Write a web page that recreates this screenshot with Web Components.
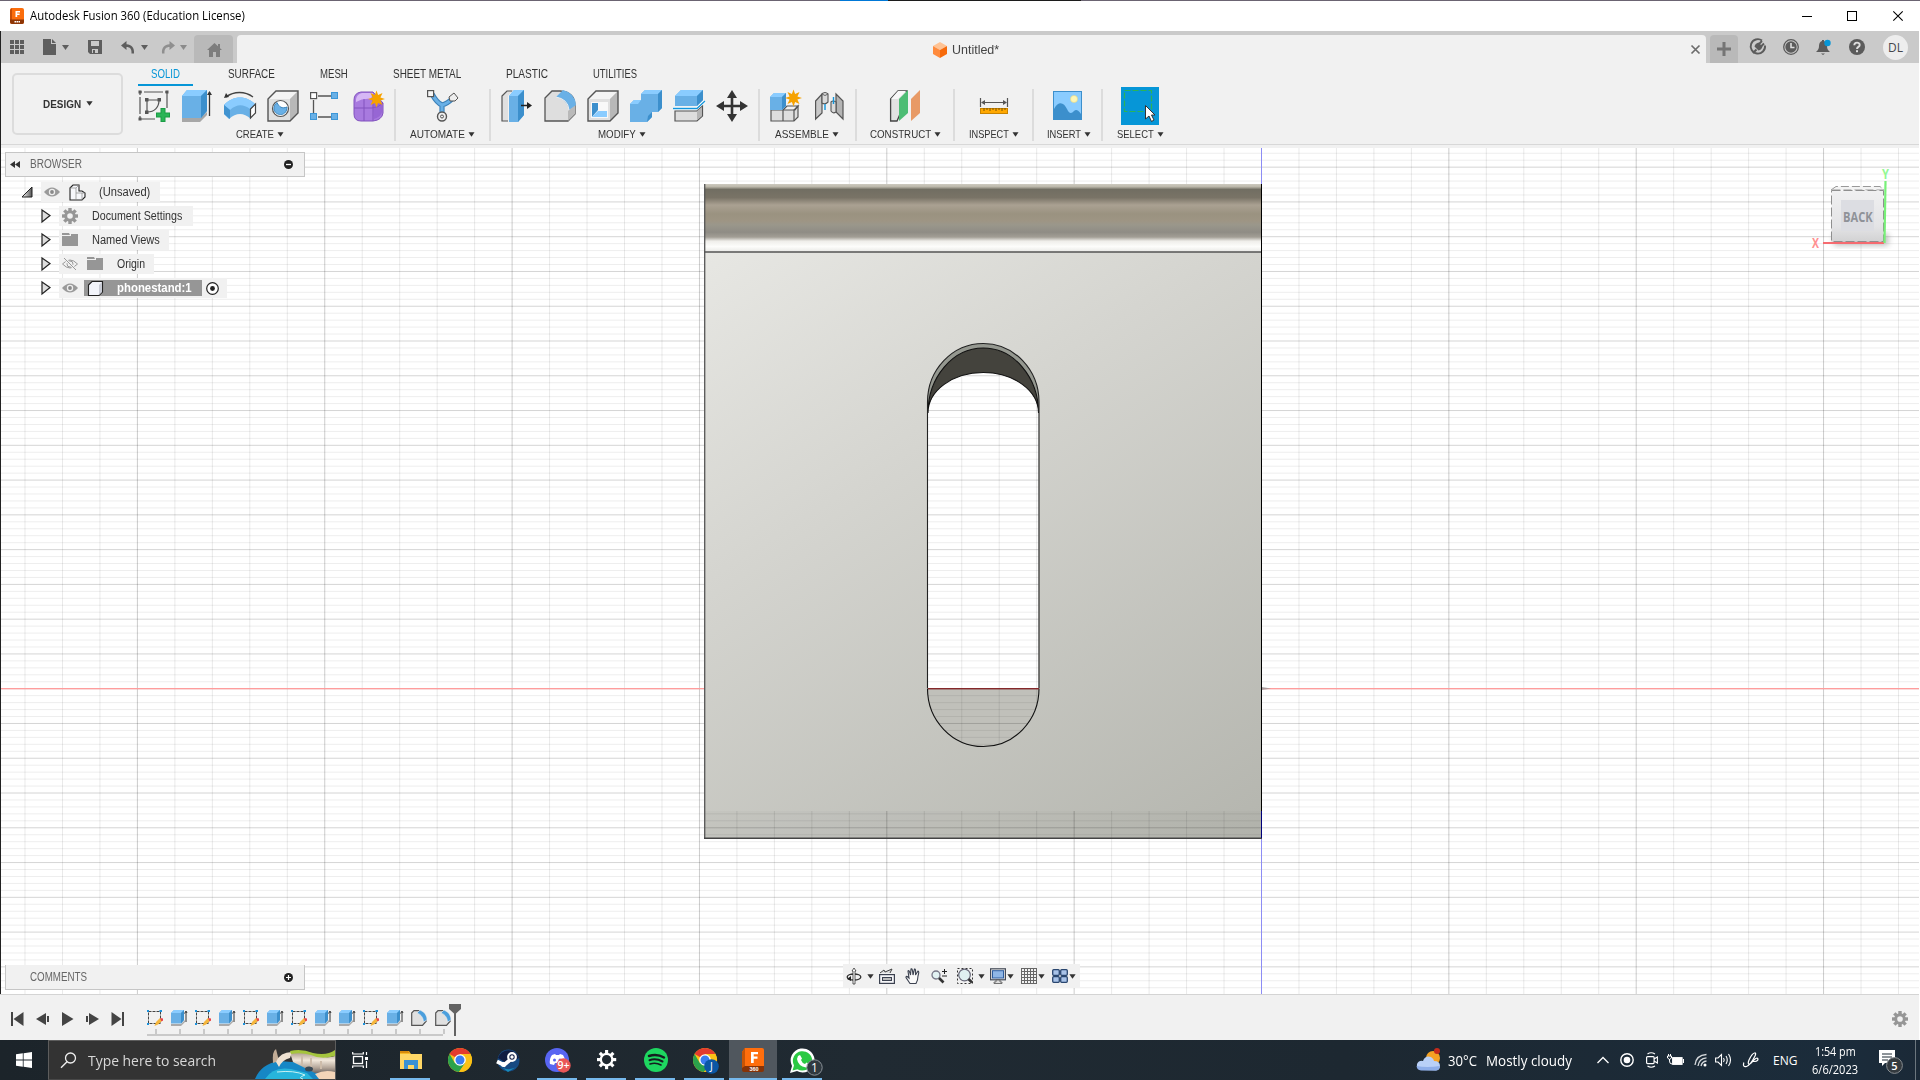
<!DOCTYPE html>
<html lang="en">
<head>
<meta charset="utf-8">
<title>Autodesk Fusion 360 (Education License)</title>
<style>
html,body{margin:0;padding:0;background:#fff;overflow:hidden}
body{width:1920px;height:1080px;font-family:"Liberation Sans",Arial,sans-serif;font-size:12px;color:#333}
</style>
</head>
<body>
<fusion-app></fusion-app>
<script>
const box=(f,t,s,o)=>`<path d="M1 9L9 1H31V23L23 31H1z" fill="${f}"/><path d="M1 9L9 1H31L23 9z" fill="${t}"/><path d="M23 9L31 1V23L23 31z" fill="${s}"/>${o?`<path d="M1 9L9 1H31V23L23 31H1z" fill="none" stroke="${o}" stroke-width="1.4"/>`:''}`;
const gear=c=>{let t='';for(let a=0;a<360;a+=45)t+=`<rect x="6.3" y="0" width="3.4" height="4" transform="rotate(${a} 8 8)"/>`;return `<g fill="${c}">${t}<path fill-rule="evenodd" d="M8 2.2a5.8 5.8 0 1 0 0 11.6a5.8 5.8 0 1 0 0-11.6zM8 5.2a2.8 2.8 0 1 1 0 5.6a2.8 2.8 0 1 1 0-5.6z"/></g>`};
const star=(x,y,r)=>{let p='';for(let i=0;i<16;i++){const q=i%2?r*.5:r,a=i*Math.PI/8;p+=`${(x+q*Math.sin(a)).toFixed(1)},${(y-q*Math.cos(a)).toFixed(1)} `}return `<polygon points="${p}" fill="#f6a200"/>`};
const chrome=`<circle cx="12" cy="12" r="12" fill="#fbc116"/><path d="M12 12L1.6 6A12 12 0 0 1 22.4 6H12z" fill="#e33b2e"/><path d="M1.6 6A12 12 0 0 0 11 24L17.2 15L12 12L6.8 15z" fill="#2ba24c"/><path d="M22.4 6H12L17.2 15L11 24A12 12 0 0 0 22.4 6z" fill="#fbc116"/><circle cx="12" cy="12" r="5.8" fill="#fff"/><circle cx="12" cy="12" r="4.5" fill="#3a7df0"/>`;
const I={
app:[14,16,`<rect width="14" height="16" rx="2" fill="#fb6d0c"/><path d="M0 2L2 0V12H0z" fill="#c84d04"/><path d="M0 11.5H14V14a2 2 0 0 1-2 2H2a2 2 0 0 1-2-2z" fill="#8e3606"/><path d="M5.5 9V3H10V4.5H7.2V5.6H9.6V7H7.2V9z" fill="#fff"/><path d="M4.5 13.8H10" stroke="#fff" stroke-width="1.4" stroke-dasharray="1.6 .5"/>`],
min:[10,10,`<path d="M0 5.5H10" stroke="#000"/>`],
max:[10,10,`<rect x=".5" y=".5" width="9" height="9" fill="none" stroke="#000"/>`],
close:[10,10,`<path d="M.3 .3L9.7 9.7M9.7 .3L.3 9.7" stroke="#000" stroke-width="1.1"/>`],
apps:[14,14,[0,5,10].map(x=>[0,5,10].map(y=>`<rect x="${x}" y="${y}" width="4" height="4" fill="#5e5e5e"/>`).join('')).join('')],
file:[13,16,`<path d="M0 0H8V5H13V16H0z" fill="#5e5e5e"/><path d="M9 0L13 4H9z" fill="#5e5e5e"/>`],
caret:[7,5,`<path d="M0 0H7L3.5 5z" fill="currentColor"/>`],
save:[14,14,`<path fill-rule="evenodd" d="M0 0H14V14H2L0 12zM3 1V6H11V1zM4 9V13H10V9z" fill="#5e5e5e"/><rect x="5" y="10" width="2" height="3" fill="#5e5e5e"/>`],
undo:[14,13,`<path d="M5.500 0L0 4.500L5.500 9V6C9 6 10.800 8 10.500 12.500H13C13.500 6.500 10.500 3.500 5.500 3.300z" fill="#5e5e5e"/>`],
redo:[14,13,`<path d="M8.500 0L14 4.500L8.500 9V6C5 6 3.200 8 3.500 12.500H1C.5 6.500 3.500 3.500 8.500 3.300z" fill="#8f8f8f"/>`],
home:[15,14,`<path d="M7.500 0L15 7H13V14H9V9H6V14H2V7H0z" fill="#7d7d7d"/><path d="M11 1H13V5H11z" fill="#7d7d7d"/>`],
cube:[14,16,`<path d="M7 0L14 4L7 8L0 4z" fill="#ffc394"/><path d="M0 4L7 8V16L0 12z" fill="#ff8b3d"/><path d="M14 4L7 8V16L14 12z" fill="#f76a0a"/>`],
x:[9,9,`<path d="M.5 .5L8.500 8.500M8.500 .5L.5 8.500" stroke="#6c6c6c" stroke-width="1.7"/>`],
plus:[14,14,`<path d="M7 0V14M0 7H14" stroke="#757575" stroke-width="3"/>`],
ext:[16,16,`<path d="M12 1.500A7.200 7.200 0 1 0 15 6.500" fill="none" stroke="#5b5b5b" stroke-width="1.900"/><path d="M3 14L6.500 10.500" stroke="#5b5b5b" stroke-width="2"/><path d="M4.500 7.500Q5 4.500 8.500 3.500L12.500 7.500Q11.500 11 8.500 11.500z" fill="#5b5b5b"/><path d="M9 5L12 2M11 7.500L14 4.500" stroke="#5b5b5b" stroke-width="1.900"/>`],
clock:[16,16,`<circle cx="8" cy="8" r="7.300" fill="none" stroke="#5b5b5b" stroke-width="1.300"/><circle cx="8" cy="8" r="5.700" fill="#5b5b5b"/><path d="M8 4V8.500H11.500" stroke="#ddd" stroke-width="1.600" fill="none"/>`],
bell:[16,17,`<path d="M0 13C2.500 11 3 9 3 7C3 4 4.500 2.500 6 2V1H8V2C10.500 3 11 5 11 7C11 10 12 11.500 14 13zM5 14.500H9L7 16z" fill="#5b5b5b"/><circle cx="11.500" cy="4" r="3.200" fill="#0696d7"/>`],
help:[16,16,`<circle cx="8" cy="8" r="8" fill="#5b5b5b"/><path d="M5.300 6.300C5.300 2.700 10.800 2.900 10.700 6C10.700 8 8 7.800 8 10" fill="none" stroke="#ddd" stroke-width="1.900"/><rect x="7" y="11.200" width="2" height="2" fill="#ddd"/>`],
sketch:[32,32,`<path d="M2 2H29M2 2V29H17M29 2V18" fill="none" stroke="#555" stroke-width="1.200"/><path d="M9 10H21C21 17 17 22 9 22z" fill="none" stroke="#555" stroke-width="1.200"/><g fill="#f1f1f1"><rect x="4" y="0" width="2" height="4"/><rect x="25" y="0" width="2" height="4"/><rect x="0" y="5" width="4" height="2"/><rect x="0" y="24" width="4" height="2"/></g><g fill="#555"><rect width="3" height="3" x=".5" y=".5"/><rect x="27.500" y=".5" width="3" height="3"/><rect x=".5" y="27.500" width="3" height="3"/><rect x="7" y="8" width="3.500" height="3.500"/><rect x="19.500" y="8" width="3.500" height="3.500"/><rect x="7" y="20.500" width="3.500" height="3.500"/></g><path d="M25 18V32M18 25H32" stroke="#1a9c45" stroke-width="5"/><path d="M25 19V31M19 25H31" stroke="#2bb457" stroke-width="3"/>`],
extrude:[32,32,`<path d="M1 28H19L26 22V25L19 32H1z" fill="#a7a7a7"/><path d="M1 6L6 0H26V21L20 28H1z" fill="#69b0e6"/><path d="M1 6L6 0H26L20 6z" fill="#8accff"/><path d="M20 6L26 0V21L20 28z" fill="#3c8fcc"/><path d="M28.500 26V2" stroke="#333" stroke-width="1.300"/><path d="M26 5L28.500 1L31 5z" fill="#333"/>`],
revolve:[32,32,`<path d="M2 7C10 1 21 1 29 7" fill="none" stroke="#444" stroke-width="1.300"/><path d="M0 8L2 3L5 7z" fill="#333"/><path d="M0 15C9 5 23 5 32 15L27 19V29C19 22 12 23 5 29L0 24z" fill="#69b0e6"/><path d="M0 15C9 5 23 5 32 15L26 19C19 14 13 14 6 20z" fill="#8accff"/><path d="M0 15L6 20V29L0 24z" fill="#4193d0"/><path d="M26.500 19L31.500 14V23L26.500 28z" fill="#fff" stroke="#444" stroke-width="1.200"/>`],
hole:[32,32,box('#e0e0e0','#f4f4f4','#b8b8b8','#555')+`<circle cx="13.500" cy="18.500" r="8" fill="#fff" stroke="#555" stroke-width="1.200"/><path d="M10 12.500C12 17 15 19 20 17C20 26 10 27 7 20C6.500 16 8 14 10 12.500z" fill="#69b0e6" stroke="#3b85bd"/>`],
pattern:[32,32,`<path d="M8 6H22M8 27H22M3.500 10V23" stroke="#555" stroke-width="1.300"/><rect x=".6" y="2.600" width="6" height="6" fill="#fff" stroke="#555" stroke-width="1.200"/><g fill="#69b0e6" stroke="#3d97d8"><rect x="21.500" y="2.500" width="6" height="6"/><rect x=".5" y="23.500" width="6" height="6"/><rect x="21.500" y="23.500" width="6" height="6"/></g>`],
form:[32,32,`<path d="M1 10Q1 3 8 2H20L30 13V23Q29 30 20 31H8Q1 31 1 24z" fill="#a87adf" stroke="#8253bf"/><path d="M3 9Q4 4 9 3H20L18 9Q10 8 3 12z" fill="#d6b7f5"/><path d="M1 18H19Q25 18 30 13M11 9V31M20 10V31" fill="none" stroke="#8253bf"/><path d="M20 11L29 14V22Q28 27 21 29z" fill="#8956cb" opacity=".55"/>`+star(23.500,9,8.500)],
automate:[32,32,`<g fill="none"><path d="M5 4Q10 13 15 15Q20 14 26 8M15 14V26" stroke="#3b80b8" stroke-width="5.200"/><path d="M5 4Q10 13 15 15Q20 14 26 8M15 14V26" stroke="#69b0e6" stroke-width="3"/></g><rect x=".6" y=".6" width="6" height="6" fill="#f6f6f6" stroke="#555" stroke-width="1.200"/><path d="M22 7L27 3L31 8L28 11H23z" fill="#eee" stroke="#555"/><circle cx="15" cy="26.500" r="4.500" fill="#eee" stroke="#555" stroke-width="1.400"/><circle cx="15" cy="26.500" r="1.500" fill="none" stroke="#555"/>`],
press:[32,32,`<path d="M1 6L6 1H11V31H1z" fill="#e0e0e0" stroke="#555" stroke-width="1.200"/><path d="M7 6L12 0H23V25L17 32H7z" fill="#f1f1f1"/><path d="M8 6L13 0H23V25L17 32H8z" fill="#69b0e6"/><path d="M8 6L13 0H23L17 6z" fill="#8accff"/><path d="M17 6L23 0V25L17 32z" fill="#3c8fcc"/><path d="M20 15.500H28" stroke="#222" stroke-width="1.500"/><path d="M26 12L31 15.500L26 19z" fill="#222"/>`],
fillet:[32,32,`<path d="M1 8L8 1H16Q31 2 31 16V24L24 31H1z" fill="#dedede" stroke="#555" stroke-width="1.300"/><path d="M24 21L31 15V24L24 31z" fill="#b9b9b9"/><path d="M12 7L19 0Q31 3 32 15L25 20Q23 9 12 7z" fill="#69b0e6"/><path d="M12 7Q24 9 25 20" stroke="#eee" fill="none"/>`],
shell:[32,32,box('#e0e0e0','#f4f4f4','#b8b8b8','#555')+`<rect x="4" y="12" width="17" height="16" fill="#f8f8f8"/><path d="M5 13H11V20L5 27z" fill="#3c8fcc"/><path d="M5 27L11 21H20V27z" fill="#8accff"/>`],
combine:[32,32,`<path d="M0 14L4 10H11V4L15 0H32V18L28 22H22V27L17 32H0z" fill="#69b0e6"/><path d="M0 14L4 10H11L8 14zM11 4L15 0H32L28 4z" fill="#8accff"/><path d="M28 4L32 0V18L28 22zM18 26L22 22V27L17 32z" fill="#3c8fcc"/>`],
split:[32,32,`<path d="M2 6L8 0H30V10L24 16H2z" fill="#69b0e6"/><path d="M2 6L8 0H30L24 6z" fill="#8accff"/><path d="M24 6L30 0V10L24 16z" fill="#3c8fcc"/><path d="M0 18.500H24L32 11" fill="none" stroke="#fff" stroke-width="3"/><path d="M0 18.500H24L32 11" fill="none" stroke="#1295db" stroke-width="1.300"/><path d="M2 21H24L29.500 16V26L24 31H2z" fill="#dedede" stroke="#555" stroke-width="1.200"/><path d="M24 21L29 17V26L24 30z" fill="#b5b5b5"/>`],
move:[32,32,`<path d="M16 4V28M4 16H28" stroke="#333" stroke-width="2.600"/><path d="M16 0L21 8H11zM16 32L21 24H11zM0 16L8 11V21zM32 16L24 11V21z" fill="#333"/>`],
assemble:[32,32,`<path d="M1 20H25L28 16V27L24 31H1z" fill="#dedede" stroke="#555" stroke-width="1.200"/><path d="M13 20V31M13 20L17 16H28L24 20V31" fill="none" stroke="#555" stroke-width="1.200"/><path d="M0 7L4 3H16V16L12 20H0z" fill="#69b0e6"/><path d="M0 7L4 3H16L12 7z" fill="#8accff"/><path d="M12 7L16 3V16L12 20z" fill="#3c8fcc"/>`+star(23.500,8,8.500)],
joint:[32,32,`<path d="M2.600 11L9 4V23L2.600 29z" fill="#c9c9c9" stroke="#555" stroke-width="1.200"/><path d="M9 4Q12 1 15 4V12Q12 15 9 13z" fill="#dadada" stroke="#555" stroke-width="1.100"/><path d="M9 4Q12 7 15 4" fill="none" stroke="#666"/><path d="M23 4L30 11V29L23 22z" fill="#b4b4b4" stroke="#555" stroke-width="1.200"/><path d="M18 12Q20 10 23 12V22Q20 24 18 21z" fill="#dadada" stroke="#555" stroke-width="1.100"/><path d="M12 14V20M20.500 7V14" stroke="#1295db" stroke-width="1.400"/>`],
construct:[32,32,`<path d="M1.600 9L9 1H18V8L8 31H1.600z" fill="#e2e2e2" stroke="#444" stroke-width="1.300"/><path d="M2 9H9L17 1H9z" fill="#f8f8f8"/><path d="M10 9L19 0V23L10 31z" fill="#4dbd74"/><path d="M22 9L31 0V23L22 31z" fill="#e89a66"/>`],
inspect:[32,32,`<path d="M2.500 8V17M29.500 8V17M4 12.500H28" stroke="#555" stroke-width="1.200"/><path d="M3 12.500L7 10V15zM29 12.500L25 10V15z" fill="#555"/><rect x="2.500" y="18.500" width="27" height="5" fill="#ffa800" stroke="#c98300"/><path d="M6 18V21M9 18V20M12 18V21M15 18V20M18 18V21M21 18V20M24 18V21M27 18V20" stroke="#7b5200"/>`],
insert:[32,32,`<rect x="1.500" y="1.500" width="28" height="28" fill="#8accff" stroke="#3c8fcc"/><circle cx="22" cy="9" r="3.500" fill="#fdf6b5" stroke="#e8d77c" stroke-width=".6"/><path d="M2 19C7 10 12 13 15 19Q18 26 22 21Q25 18 29 24V29H2z" fill="#3c8fcc"/>`],
select:[38,38,`<rect width="38" height="38" fill="#0696d7"/><rect x="3.500" y="3.500" width="27" height="21" fill="none" stroke="#2bb457" stroke-width="1.200" stroke-dasharray="6 2"/><path d="M24.500 18.500V32L28 29L30.500 34.500L33 33L30.500 28H34z" fill="#fff" stroke="#333"/>`],
rew:[10,7,`<path d="M5 0V7L0 3.500zM10 0V7L5 3.500z" fill="#333"/>`],
cmin:[9,9,`<circle cx="4.500" cy="4.500" r="4.500" fill="#222"/><path d="M2 4.500H7" stroke="#fff" stroke-width="1.300"/>`],
cplus:[9,9,`<circle cx="4.500" cy="4.500" r="4.500" fill="#222"/><path d="M2 4.500H7M4.500 2V7" stroke="#fff" stroke-width="1.200"/>`],
open:[12,12,`<defs><linearGradient id="g"><stop offset=".2" stop-color="#ddd"/><stop offset="1" stop-color="#555"/></linearGradient></defs><path d="M11 1V11H1z" fill="url(#g)" stroke="#222"/>`],
shut:[10,14,`<path d="M1 1L9 6.500L1 13z" fill="#ddd" stroke="#222" stroke-width="1.200"/>`],
eye:[16,16,`<path d="M0 8Q8-1 16 8Q8 17 0 8z" fill="#9a9a9a"/><circle cx="8" cy="8" r="3.200" fill="#eee"/><circle cx="8" cy="8" r="1.900" fill="#8a8a8a"/>`],
eyeoff:[16,16,`<path d="M.5 8Q8 0 15.500 8Q8 16 .5 8z" fill="none" stroke="#999"/><circle cx="8" cy="8" r="3" fill="none" stroke="#999"/><path d="M2 2L14 14" stroke="#f1f1f1" stroke-width="2.500"/><path d="M2 2L14 14" stroke="#999"/>`],
comp:[17,17,`<path d="M1 4L4 1H10V7H13L16 9V13L13 16H1z" fill="#f6f7fb" stroke="#222" stroke-width="1.100"/><path d="M1 4H7L10 1M7 4V9H13L16 9M13 9V16M7 9V16" fill="none" stroke="#888" stroke-width=".7"/>`],
gear:[16,16,gear('#969696')],
folder:[16,16,`<path d="M0 1H7L8 3H0zM0 4H16V14H0z" fill="#969696"/><path d="M9 2H16V4H9z" fill="#969696"/>`],
body:[17,17,`<path d="M1.500 5L5 1.500H15.500V12L12 15.500H1.500z" fill="#f2f4fa" stroke="#222" stroke-width="1.100"/><path d="M12 5L15 2V12L12 15z" fill="#c9ccd6"/>`],
radio:[13,13,`<circle cx="6.500" cy="6.500" r="5.800" fill="#fff" stroke="#222" stroke-width="1.200"/><circle cx="6.500" cy="6.500" r="2.400" fill="#222"/>`],
orbit:[16,16,`<ellipse cx="8" cy="9" rx="6.800" ry="3" fill="none" stroke="#333" stroke-width="1.400"/><path d="M8 0L6 3H7V16H9V3H10z" fill="#fff" stroke="#333" stroke-width=".8"/><path d="M1 11L5 8V13z" fill="#222"/>`],
look:[16,16,`<rect x=".6" y="6.600" width="14.800" height="8.800" fill="#f5f6f8" stroke="#3c4250" stroke-width="1.200"/><rect x="3.500" y="9.500" width="9" height="3" fill="#bbb" stroke="#3c4250"/><path d="M1 5L5 2L6 4L13 1L11 5" fill="#ddd" stroke="#444"/>`],
hand:[16,16,`<path d="M5 15.500L1 9.500Q1 7 4 10L3 3Q4 1 5.500 7L6 1Q7.500-.5 8 7L9.500 1Q11 .5 10.500 7L13 3Q14.500 3 13 8Q13 12 11 15.500z" fill="#fafafa" stroke="#3c4250" stroke-width="1.100"/>`],
zoom:[16,16,`<circle cx="5" cy="7" r="4" fill="#e2f2f3" stroke="#778" stroke-width="1.300"/><path d="M8 10L12.500 14.500" stroke="#333" stroke-width="2.600"/><path d="M11 3.500H16M13.500 1V6M11 8H16" stroke="#222"/>`],
zoomw:[16,16,`<rect x=".5" y=".5" width="15" height="15" fill="none" stroke="#333" stroke-dasharray="2 2"/><circle cx="7.500" cy="7" r="5.800" fill="#dff0f1" stroke="#667" stroke-width="1.200"/><path d="M11.500 11L15 14.500" stroke="#333" stroke-width="2.600"/>`],
disp:[16,16,`<rect x=".6" y=".8" width="14.800" height="11" fill="#eee" stroke="#454b58" stroke-width="1.200"/><rect x="2.500" y="2.700" width="11" height="7.300" fill="#8fb6e6" stroke="#2d5c9e"/><path d="M6 12H10V14H12V15.500H4V14H6z" fill="#ddd" stroke="#555" stroke-width=".8"/>`],
grid:[16,16,`<path d="M.5 0V16M3.500 0V16M6.500 0V16M9.500 0V16M12.500 0V16M15.500 0V16M0 .5H16M0 3.500H16M0 6.500H16M0 9.500H16M0 12.500H16M0 15.500H16" stroke="#666"/>`],
views:[16,16,`<g fill="#a9c3e8" stroke="#29466f" stroke-width="1.300"><rect x=".7" y="1.700" width="6.600" height="5.600" rx="1"/><rect x="8.700" y="1.700" width="6.600" height="5.600" rx="1"/><rect x=".7" y="8.700" width="6.600" height="5.600" rx="1"/><rect x="8.700" y="8.700" width="6.600" height="5.600" rx="1"/></g>`],
first:[13,14,`<path d="M1 0V14" stroke="#444" stroke-width="2"/><path d="M12.500 0V14L2.500 7z" fill="#444"/>`],
prev:[13,14,`<path d="M10 1V13L0 7z" fill="#444"/><path d="M12 4V10" stroke="#444" stroke-width="2"/>`],
play:[13,14,`<path d="M1 0V14L12.500 7z" fill="#444"/>`],
next:[13,14,`<path d="M3 1V13L13 7z" fill="#444"/><path d="M1 4V10" stroke="#444" stroke-width="2"/>`],
last:[13,14,`<path d="M12 0V14" stroke="#444" stroke-width="2"/><path d="M.5 0V14L10.500 7z" fill="#444"/>`],
ts:[16,16,`<path d="M1.500 1.500H13.500V13.500H1.500z" fill="none" stroke="#444" stroke-dasharray="3 1"/><g fill="#1c92dc"><rect width="2" height="2"/><rect x="12.500" width="2.500" height="2"/><rect y="13" width="2" height="2"/></g><path d="M7.500 16L9 12L13 8L16 10L11 14.500z" fill="#f5b63c"/><path d="M13 8L16 8.500V10.500L14.500 11.500z" fill="#e8404a"/>`],
te:[16,16,`<path d="M0 14H10L14 10V12L10 16H0z" fill="#aaa"/><path d="M0 3L3 0H13V10L10 13.500H0z" fill="#69b0e6"/><path d="M0 3L3 0H13L10 3z" fill="#8accff"/><path d="M10 3L13 0V10L10 13.500z" fill="#3c8fcc"/><path d="M15 12V2M13.500 3.500L15 1L16 3" stroke="#333" stroke-width="1" fill="none"/>`],
tf:[16,16,`<path d="M.7 3L3 .7H8Q15 3 15.300 11L11.500 15.300H.7z" fill="#e0e0e0" stroke="#555" stroke-width="1.200"/><path d="M6 3L9 0Q16 3 16 10L12.500 12Q12 5 6 3z" fill="#4b9fdd" stroke="#eee" stroke-width=".6"/>`],
marker:[12,32,`<path d="M0 0H12V5L7 9.500V32H5V9.500L0 5z" fill="#636363"/>`],
win:[16,16,`<path d="M0 2.300L6.800 1.300V7.600H0zM7.600 1.200L16 0V7.600H7.600zM0 8.400H6.800V14.700L0 13.700zM7.600 8.400H16V16L7.600 14.800z" fill="#fff"/>`],
search:[17,17,`<circle cx="10.500" cy="6" r="5" fill="none" stroke="#eee" stroke-width="1.300"/><path d="M7 9.800L1 15.800" stroke="#eee" stroke-width="1.400"/>`],
art:[80,38,`<defs><linearGradient id="ag" x2="0" y2="1"><stop stop-color="#a89686"/><stop offset=".4" stop-color="#f1e7da"/><stop offset=".75" stop-color="#b3a598"/><stop offset="1" stop-color="#6f6763"/></linearGradient></defs><path d="M0 38Q6 23 24 20L50 22L62 30L76 38z" fill="#1687c5"/><path d="M10 38Q18 25 36 28L52 32L58 38z" fill="#27b5dc"/><path d="M18 22Q17 10 21 8L24 20z" fill="#c2ac96"/><path d="M35 12Q48 9 60 14Q72 18 80 15V32H60L38 21z" fill="url(#ag)"/><path d="M21 21Q25 11 37 11L35 17Q27 19 24 26z" fill="#efe2d2"/><path d="M35 10Q46 7 58 12Q72 15 80 9V15Q66 19 56 14Q46 11 36 13z" fill="#a5c43d"/><path d="M47 15V24M56 17V26M66 20V28" stroke="#cdbcaa" stroke-width="2"/><ellipse cx="54" cy="28" rx="4" ry="2.500" fill="#394955"/><path d="M60 33Q70 28 80 31V38H64z" fill="#f3d5b8"/><path d="M22 31Q39 29 50 34Q42 37 48 38" stroke="#c7f1f3" fill="none"/>`],
task:[16,16,`<rect x="1.500" y="4.500" width="9" height="7" fill="none" stroke="#fff" stroke-width="1.300"/><path d="M.7 0V2H11.300V0M.7 16V14H11.300V16M14.500 0V3M14.500 9V16" fill="none" stroke="#fff" stroke-width="1.200"/><rect x="13" y="5" width="3" height="3" fill="#fff"/>`],
explorer:[24,24,`<path d="M1 3H10L12 6H22V21H1z" fill="#f5b929"/><path d="M1 3H9L11 5H1z" fill="#d98b0b"/><path d="M1 6H23V21H1z" fill="#ffd766"/><path d="M5 21V12H19V21H15V17H9V21z" fill="#3a91d4"/>`],
chrome:[24,24,chrome],
steam:[24,24,`<circle cx="12.500" cy="12.500" r="11" fill="#174a82"/><path d="M2 10A11 11 0 0 1 23 10L12 16z" fill="#101c42"/><path d="M3 17Q12 25 22 18L12 24z" fill="#1789b9"/><circle cx="16" cy="9" r="3.800" fill="none" stroke="#fff" stroke-width="2.200"/><path d="M14 12L8 17L1 13.500" stroke="#fff" stroke-width="3.800" fill="none"/><circle cx="7.500" cy="16.500" r="2.500" fill="#fff"/><circle cx="16" cy="9" r="1.700" fill="#fff"/>`],
discord:[28,26,`<circle cx="13" cy="13" r="12" fill="#5865f2"/><path d="M8 8L11 7L12 8H15L16 7L19 8Q22 13 21 18L17 18L16 16H11L10 18L6 17Q5 12 8 8z" fill="#fff"/><circle cx="10.500" cy="13" r="1.500" fill="#5865f2"/><circle cx="16" cy="13" r="1.500" fill="#5865f2"/><circle cx="19.500" cy="18.500" r="7.200" fill="#e95656"/><text x="19.500" y="22.200" fill="#fff" font-family="Open Sans" font-size="10.500" font-weight="600" text-anchor="middle">9+</text>`],
sets:[20,20,`<g transform="scale(1.200)"><g fill="#fff">${[0,45,90,135,180,225,270,315].map(a=>`<rect x="6.700" y="0" width="2.600" height="3.500" transform="rotate(${a} 8 8)"/>`).join('')}</g><circle cx="8" cy="8" r="4.800" fill="none" stroke="#fff" stroke-width="1.900"/></g>`],
spot:[24,24,`<circle cx="12" cy="12" r="12" fill="#1ed760"/><g fill="none" stroke="#151e20" stroke-linecap="round"><path d="M5 8Q13 5.500 20 9.500" stroke-width="2.500"/><path d="M5.500 12.200Q12 10 18.500 13.500" stroke-width="2"/><path d="M6 16Q12 14.200 17 17" stroke-width="1.600"/></g>`],
chromej:[26,26,chrome+`<circle cx="18.500" cy="18.500" r="7.300" fill="#0b57a4"/><text x="18.500" y="22.300" fill="#fff" font-family="Open Sans" font-size="10.500" text-anchor="middle">J</text>`],
fusion:[22,24,`<path d="M0 4L3 0H20Q22 0 22 2V19H0z" fill="#ff6e0d"/><path d="M0 4L3 0V19L0 22z" fill="#c95404"/><path d="M0 20L3 18H22V22Q22 24 20 24H2Q0 24 0 22z" fill="#873307"/><path d="M9 15V4H16V6.300H11.700V8.500H15.500V10.800H11.700V15z" fill="#fff"/><text x="12" y="22.800" fill="#fff" font-family="Liberation Sans" font-weight="bold" font-size="5.500" text-anchor="middle">360</text>`],
wa:[34,28,`<path d="M1 25L3 18A12 12 0 1 1 8 23z" fill="#fff"/><path d="M3.500 22.500L5 17.500A9.700 9.700 0 1 1 8.500 21.200z" fill="#2bc943"/><path d="M9 8L11 7L13 10.500L12 12Q13 15 16 16L17.500 14.500L21 16.500Q20 20 17 19.500Q9 18 8 11z" fill="#fff"/><circle cx="25.500" cy="19.500" r="7.700" fill="#303940" stroke="#899097"/><text x="25.500" y="24" fill="#fff" font-family="Open Sans" font-size="12" text-anchor="middle">1</text>`],
weather:[25,24,`<circle cx="17" cy="10" r="7" fill="#f5a223"/><path d="M5 22Q0 21 1 16Q3 12 7 13Q9 7 15 9Q18 11 18 13Q24 13 24 18Q24 22 20 22.500z" fill="#b9d0f7"/><path d="M5 22.500Q1 22 .5 18Q11 20 24 18Q23 22.500 20 22.500z" fill="#8eaee9"/><circle cx="21" cy="3" r="3" fill="#c42b1c"/>`],
chev:[12,8,`<path d="M.5 7L6 1.500L11.500 7" fill="none" stroke="#fff" stroke-width="1.300"/>`],
rec:[14,14,`<circle cx="7" cy="7" r="6.200" fill="none" stroke="#fff" stroke-width="1.400"/><circle cx="7" cy="7" r="3.300" fill="#fff"/>`],
cam:[12,16,`<rect x=".6" y="4.600" width="7.500" height="7" rx="1" fill="none" stroke="#fff" stroke-width="1.200"/><path d="M8 7L11.400 5V11L8 9M1.500 2Q5-.5 9 2M1.500 14Q5 16.500 9 14" fill="none" stroke="#fff" stroke-width="1.100"/>`],
batt:[17,14,`<rect x="5.600" y="4.600" width="9.500" height="6.800" fill="#fff" stroke="#fff"/><path d="M16.500 6V10M2.500 6V8Q2.500 11 5 11M.5 3H4.500V5Q2.500 8 .5 5zM1.500 1V3M3.500 1V3" stroke="#fff" fill="none"/>`],
wifi:[14,14,`<path d="M1 12Q2 2 12.500 1.500M4 13Q5 5.500 12.500 4.800M7 13Q8 8.500 12.500 8" fill="none" stroke="#d5d9dc" stroke-width="1.300"/><circle cx="11" cy="12" r="1.500" fill="#fff"/>`],
vol:[17,14,`<path d="M.6 5H3L6.500 1.500V12.500L3 9H.6z" fill="none" stroke="#fff" stroke-width="1.100"/><path d="M8.500 5Q10 7 8.500 9M11 3Q13.500 7 11 11M13.500 1Q17.500 7 13.500 13" fill="none" stroke="#fff" stroke-width="1.100"/>`],
pen:[16,16,`<path d="M.8 10.500Q-.5 15.500 3.500 14.500Q7.500 13 12 4Q13.500 .5 11.500 1Q9 1.500 6 8Q4.500 12 6 12Q8 12 11 8M11 8Q14 5 15 7Q15 9 12 9.500L9 9.500" fill="none" stroke="#fff" stroke-width="1.200"/>`],
notif:[26,26,`<path d="M0 0H16V13H6L3 16V13H0z" fill="#fff"/><path d="M3 4H13M3 7H13M3 10H9" stroke="#1d2933"/><circle cx="15.500" cy="15.500" r="7.900" fill="#343a3f" stroke="#878c90"/><text x="15.500" y="19.500" fill="#fff" font-family="Open Sans" font-weight="600" font-size="11" text-anchor="middle">5</text>`]
};
const def=(name,html,extra)=>customElements.define(name,class extends HTMLElement{
  connectedCallback(){ if(this.shadowRoot)return; const r=this.attachShadow({mode:'open'}); r.innerHTML=typeof html==='function'?html(this):html; if(extra)extra(this,r); }
});

/* Inline SVG icon, name="…" */
def('fx-icon',h=>{const [w,t,s]=I[h.getAttribute('name')];return `<style>:host{display:block;flex:none;width:${w}px;height:${t}px}svg{display:block;overflow:visible}</style><svg width="${w}" height="${t}" viewBox="0 0 ${w} ${t}">${s}</svg>`});

/* Text condensed or expanded to occupy w pixels */
def('fit-text',h=>`<style>:host{display:block;flex:none;white-space:nowrap;width:${h.getAttribute('w')}px}span{display:inline-block;transform-origin:0 50%}</style><span><slot></slot></span>`,(h,r)=>{
  const s=r.querySelector('span'),w=+h.getAttribute('w');
  s.style.transform='scaleX('+(w/s.offsetWidth).toFixed(4)+')';
});

def('title-bar',`<style>
:host{display:flex;height:31px;box-sizing:border-box;align-items:center;background:#fff;color:#000;padding-left:10px;padding-bottom:1px;border-top:1px solid;border-image:linear-gradient(90deg,#6b6472 840px,#0078d7 840px,#0078d7 888px,#1c1c1c 888px,#1c1c1c 1081px,#6b6472 1081px) 1;font:12px "Open Sans","Noto Sans",sans-serif}
fit-text{margin-left:6px;margin-right:auto}.c{display:flex;gap:36px;padding-right:17px}
</style><fx-icon name="app"></fx-icon><fit-text w="215">Autodesk Fusion 360 (Education License)</fit-text><div class="c"><fx-icon name="min" style="margin-right:-1px"></fx-icon><fx-icon name="max"></fx-icon><fx-icon name="close"></fx-icon></div>`);

def('tab-strip',`<style>
:host{display:flex;height:32px;background:#cacaca;margin-left:1px;margin-right:1px;color:#5e5e5e}
.q{display:flex;align-items:center;width:184px;padding-left:9px;box-sizing:content-box}
.home,.add{margin-top:4px;background:#b9b9b9;border-radius:4px 4px 0 0;display:flex;align-items:center;justify-content:center}
.home{width:39px;padding:2px 0 0 2px;box-sizing:border-box}.add{width:28px;margin-left:4px}
.doc{margin:4px 0 0 4px;flex:none;width:1469px;background:#f1f1f1;border-radius:4px 4px 0 0;display:flex;align-items:center;color:#444;font-size:13px;box-sizing:border-box;padding:1px 6px 0 696px}
.r{display:flex;align-items:center;gap:17px;margin-left:12px}
.av{width:25px;height:25px;border-radius:50%;background:#ededed;display:flex;align-items:center;justify-content:center;color:#45464d;font:12px "Open Sans",sans-serif;margin-left:1px}
</style><div class="q"><fx-icon name="apps"></fx-icon><fx-icon name="file" style="margin-left:19px"></fx-icon><fx-icon name="caret" style="margin-left:6px"></fx-icon><fx-icon name="save" style="margin-left:19px"></fx-icon><fx-icon name="undo" style="margin-left:19px"></fx-icon><fx-icon name="caret" style="margin-left:6px"></fx-icon><fx-icon name="redo" style="margin-left:13px"></fx-icon><fx-icon name="caret" style="margin-left:5px;color:#8b8b8b"></fx-icon></div>
<div class="home"><fx-icon name="home"></fx-icon></div>
<div class="doc"><fx-icon name="cube"></fx-icon><fit-text w="47" style="margin-left:5px;margin-right:auto">Untitled*</fit-text><fx-icon name="x"></fx-icon></div>
<div class="add"><fx-icon name="plus"></fx-icon></div>
<div class="r"><fx-icon name="ext"></fx-icon><fx-icon name="clock"></fx-icon><fx-icon name="bell"></fx-icon><fx-icon name="help"></fx-icon><div class="av">DL</div></div>`);

def('tool-group',h=>`<style>
:host{display:flex;flex-direction:column;align-items:center;flex:none;box-sizing:border-box;height:52px;width:${h.getAttribute('w')}px;border-right:2px solid ${h.hasAttribute('last')?'transparent':'#dcdcdc'}}
.i{display:flex;gap:11px;height:38px;margin-top:-2px;align-items:center}
.l{display:flex;align-items:center;gap:3px;margin-top:2px;font-size:11.500px;line-height:14px;color:#333;margin-left:${h.getAttribute('lx')||0}px}
.l fx-icon{transform:scale(.86)}
</style><div class="i">${h.getAttribute('icons').split(' ').map(n=>`<fx-icon name="${n}"></fx-icon>`).join('')}</div><div class="l"><fit-text w="${h.getAttribute('lw')}">${h.getAttribute('label')}</fit-text><fx-icon name="caret"></fx-icon></div>`);

def('ribbon-bar',`<style>
:host{display:flex;height:85px;box-sizing:border-box;background:#f1f1f1;margin:0 1px;padding-left:11px;box-shadow:inset 0 -3px #f1f1f1,inset 0 -4px #d8d8d8}
.d{box-sizing:border-box;width:111px;height:62px;margin-top:10px;border:2px solid #dcdcdc;border-radius:5px;display:flex;align-items:center;justify-content:center;gap:5px;padding-bottom:1px;font-weight:bold;font-size:11.500px;color:#333}
.m{display:flex;flex-direction:column}
.t{display:flex;gap:19px;padding-left:15px;height:24px;margin-bottom:2px;font-size:12px}
.t div{padding:4px 13px 0;box-sizing:border-box;height:23px;line-height:15px}.t .on{color:#0696d7;border-bottom:2.500px solid #0696d7;margin-right:3px}
.g{display:flex;padding-left:6px}
</style><div class="d"><fit-text w="38">DESIGN</fit-text><fx-icon name="caret" style="transform:scale(.9)"></fx-icon></div>
<div class="m"><div class="t"><div class="on"><fit-text w="29">SOLID</fit-text></div><div><fit-text w="47">SURFACE</fit-text></div><div><fit-text w="28">MESH</fit-text></div><div><fit-text w="68">SHEET METAL</fit-text></div><div><fit-text w="42">PLASTIC</fit-text></div><div><fit-text w="44">UTILITIES</fit-text></div></div>
<div class="g"><tool-group w="267" icons="sketch extrude revolve hole pattern form" label="CREATE" lw="38" lx="-3"></tool-group><tool-group w="95" icons="automate" label="AUTOMATE" lw="55"></tool-group><tool-group w="269" icons="press fillet shell combine split move" label="MODIFY" lw="38" lx="-5"></tool-group><tool-group w="97" icons="assemble joint" label="ASSEMBLE" lw="54" lx="-2"></tool-group><tool-group w="98" icons="construct" label="CONSTRUCT" lw="61"></tool-group><tool-group w="79" icons="inspect" label="INSPECT" lw="40"></tool-group><tool-group w="69" icons="insert" label="INSERT" lw="34" lx="2"></tool-group><tool-group w="76" icons="select" label="SELECT" lw="37" last></tool-group></div></div>`);

/* Modelling canvas; drawing units are window pixels, origin shifted by the bars above */
def('model-canvas',()=>{
  let g='';
  for(let k=-34;k<=18;k++){const M=k%5===0;g+=`<rect x="${(1261+k*37.47).toFixed(2)}" y="148" width="1" height="846" fill="#000" opacity="${M?.2:.085}"/>`}
  for(let k=-78;k<=44;k++){const M=k%5===0;g+=`<rect x="1" y="${(688.200+k*6.954).toFixed(2)}" width="1918" height="1" fill="#000" opacity="${M?.17:.07}"/>`}
  return `<style>:host{display:block;width:1920px;height:846px}svg{display:block}</style>
<svg width="1920" height="846" viewBox="0 148 1920 846"><defs><g id="gr">${g}</g>
<linearGradient id="bd" gradientUnits="userSpaceOnUse" x1="705" y1="252" x2="1130" y2="920"><stop stop-color="#e7e7e3"/><stop offset=".35" stop-color="#d5d5d0"/><stop offset="1" stop-color="#b4b5ae"/></linearGradient>
<linearGradient id="bn" x2="0" y2="1"><stop stop-color="#cdcabf"/><stop offset=".04" stop-color="#bcb8ab"/><stop offset=".08" stop-color="#716e62"/><stop offset=".2" stop-color="#797366"/><stop offset=".31" stop-color="#aaa192"/><stop offset=".44" stop-color="#9a9280"/><stop offset=".54" stop-color="#9e9584"/><stop offset=".6" stop-color="#9a978b"/><stop offset=".71" stop-color="#8f8c85"/><stop offset=".78" stop-color="#a29e95"/><stop offset=".84" stop-color="#efeeea"/><stop offset=".92" stop-color="#fdfdfb"/><stop offset="1" stop-color="#e8e8e5"/></linearGradient>
<clipPath id="lo"><rect x="705" y="811" width="557" height="27"/><path d="M927.500 688.500A55.750 58 0 0 0 1039 688.500z"/></clipPath></defs>
<rect x="1" y="148" width="1918" height="846" fill="#fff"/><use href="#gr"/>
<rect x="1" y="688" width="1918" height="1.300" fill="#ff9c9c"/><rect x="1261" y="148" width="1" height="846" fill="#8c8cf4"/>
<path d="M1262 687L1271 688.500L1262 690z" fill="#999" opacity=".8"/>
<path fill="url(#bd)" fill-rule="evenodd" d="M704.500 252H1261.500V838H704.500zM928 413A55.300 41 0 0 1 1038.600 413V688H928z"/>
<rect x="704.500" y="184" width="557" height="68" fill="url(#bn)"/>
<path d="M927.500 413V402A55.750 58.500 0 0 1 1039 402V413A55.750 41 0 0 0 927.500 413z" fill="#959890"/>
<path d="M928 413A55.250 65 0 0 1 1038.500 413A55.250 40.500 0 0 0 928 413z" fill="#44433d" stroke="#111" stroke-width="1.100"/>
<path d="M927.500 688.500A55.750 58 0 0 0 1039 688.500z" fill="#c0c0ba"/>
<g clip-path="url(#lo)"><rect x="704" y="811" width="558" height="27" fill="#555" opacity=".03"/><use href="#gr"/></g>
<path d="M927.500 688V402A55.750 58.500 0 0 1 1039 402V688" fill="none" stroke="#222" stroke-width="1.100"/>
<path d="M927.500 688.500A55.750 58 0 0 0 1039 688.500" fill="none" stroke="#111" stroke-width="1.100"/>
<rect x="928" y="688" width="111" height="1.400" fill="#85282a"/>
<path d="M704 252H1262" stroke="#555" stroke-width="1.400"/><path d="M704.700 184V838" stroke="#555" stroke-width="1.300"/><path d="M704 838.200H1262" stroke="#444" stroke-width="1.400"/>
<path d="M1261.500 184V811" stroke="#000"/><path d="M1261.500 811V838" stroke="#00007a"/>
</svg>`});

def('view-cube',`<style>:host{display:block}svg{display:block;overflow:visible}</style><svg width="90" height="90" viewBox="1808 162 90 90">
<defs><filter id="b" x="-20%" y="-20%" width="150%" height="150%"><feGaussianBlur stdDeviation="3"/></filter><linearGradient id="f" x2="0" y2="1"><stop stop-color="#f0f0f1"/><stop offset=".7" stop-color="#e4e4e6"/><stop offset="1" stop-color="#d2d2d3"/></linearGradient></defs>
<rect x="1834" y="234" width="54" height="11" fill="#777" opacity=".55" filter="url(#b)"/>
<path d="M1831 190L1836 186.500H1880L1884 190z" fill="#f3f3f3" stroke="#999" stroke-dasharray="8 3"/><rect x="1831.500" y="190.500" width="52" height="51" fill="url(#f)" stroke="#8f8f8f" stroke-dasharray="9 3"/><rect x="1841" y="200" width="33" height="31" fill="#dcdde2"/>
<text transform="translate(1843 222) scale(.78 1)" font-family="Open Sans" font-weight="bold" font-size="15" fill="#8f9298" textLength="38" lengthAdjust="spacingAndGlyphs">BACK</text>
<rect x="1823" y="242" width="61" height="2" fill="#f66b70"/><path d="M1885.500 181L1884.500 243" stroke="#78f078" stroke-width="2.200"/>
<text x="1812" y="247.500" font-family="Open Sans" font-weight="bold" font-size="15" fill="#ff9090" textLength="7" lengthAdjust="spacingAndGlyphs">X</text><text x="1882" y="178.500" font-family="Open Sans" font-weight="bold" font-size="15" fill="#93f893" textLength="7" lengthAdjust="spacingAndGlyphs">Y</text></svg>`);

def('tree-row',h=>{const a=n=>h.getAttribute(n),sub=!h.hasAttribute('root'),sel=h.hasAttribute('sel');
return `<style>:host{display:flex;align-items:center;height:20px;padding-left:${sub?36:16}px;font-size:12px;color:#333}
.b{display:flex;align-items:center;background:#f1f1f1;height:20px;box-sizing:border-box;padding-left:3px;width:${a('w')}px;margin-left:8px}
.s{display:flex;align-items:center;height:16px;margin-left:6px;${sel?'background:#969696;color:#fff;font-weight:bold;width:118px;padding-left:3px;box-sizing:border-box':'padding-left:3px'}}
.r{margin-left:4px}.s fit-text{margin-left:${sub&&!sel?14:13}px}</style><fx-icon name="${sub?'shut':'open'}"></fx-icon><div class="b"><fx-icon name="${a('i')}"></fx-icon>${a('i2')?`<div class="s"><fx-icon name="${a('i2')}"></fx-icon><fit-text w="${a('tw')}">${a('t')}</fit-text></div>`:`<fit-text w="${a('tw')}" style="margin-left:14px">${a('t')}</fit-text>`}${sel?'<fx-icon class="r" name="radio"></fx-icon>':''}</div>`});

def('browser-panel',`<style>:host{display:block;width:300px}
.h{display:flex;align-items:center;box-sizing:border-box;height:25px;border:1px solid #c6c6c6;background:#f1f1f1;padding:0 11px 1px 4px;color:#666;font-size:12px}
.h fit-text{margin:0 auto 0 10px}.t{display:flex;flex-direction:column;gap:4px;padding-top:5px}</style>
<div class="h"><fx-icon name="rew"></fx-icon><fit-text w="52">BROWSER</fit-text><fx-icon name="cmin"></fx-icon></div>
<div class="t"><tree-row root i="eye" i2="comp" w="119" t="(Unsaved)" tw="51"></tree-row><tree-row i="gear" w="134" t="Document Settings" tw="90"></tree-row><tree-row i="folder" w="110" t="Named Views" tw="68"></tree-row><tree-row i="eyeoff" i2="folder" w="95" t="Origin" tw="28"></tree-row><tree-row sel i="eye" i2="body" w="168" t="phonestand:1" tw="75"></tree-row></div>`);

def('comments-panel',`<style>:host{display:flex;align-items:center;box-sizing:border-box;width:300px;height:25px;border:1px solid #c6c6c6;border-top:0;background:#f1f1f1;padding:0 11px 0 24px;color:#666;font-size:12px;justify-content:space-between}</style><fit-text w="57">COMMENTS</fit-text><fx-icon name="cplus"></fx-icon>`);

def('nav-bar',`<style>:host{display:flex;align-items:center;width:237px;height:24px;box-sizing:border-box;padding-left:3px;background:#f1f1f1;color:#333}fx-icon+fx-icon{margin-left:10px}fx-icon.c{margin-left:5px;transform:scale(.9)}fx-icon.n{margin-left:1px}fx-icon.c+.k{margin-left:5px}fx-icon.n+.k{margin-left:7px}</style>
<fx-icon name="orbit"></fx-icon><fx-icon class="c" name="caret"></fx-icon><fx-icon name="look" class="k"></fx-icon><fx-icon name="hand"></fx-icon><fx-icon name="zoom"></fx-icon><fx-icon name="zoomw"></fx-icon><fx-icon class="c" name="caret"></fx-icon><fx-icon class="k" name="disp"></fx-icon><fx-icon class="c n" name="caret"></fx-icon><fx-icon class="k" name="grid"></fx-icon><fx-icon class="c n" name="caret"></fx-icon><fx-icon class="k" name="views"></fx-icon><fx-icon class="c n" name="caret"></fx-icon>`);

def('time-line',`<style>:host{display:flex;box-sizing:border-box;height:46px;background:#f1f1f1;border-top:1px solid #d4d4d4;padding-left:11px;margin-right:1px}
.p{display:flex;gap:12px;height:14px;margin-top:17px}.s{display:flex;margin:15px 0 0 23px;height:26px;border-bottom:2px solid #c9c9c9;width:296px;box-sizing:border-box}
.s div{flex:none;width:24px;height:24px;background:linear-gradient(#c9c9c9,#c9c9c9) 8px 19px/2px 5px no-repeat}
.m{margin:9px 0 0 6px}.g{margin:16px 11px 0 auto}</style>
<div class="p"><fx-icon name="first"></fx-icon><fx-icon name="prev"></fx-icon><fx-icon name="play"></fx-icon><fx-icon name="next"></fx-icon><fx-icon name="last"></fx-icon></div>
<div class="s">${[...'seseseseeseff'].map(c=>`<div><fx-icon name="t${c}"></fx-icon></div>`).join('')}</div><fx-icon class="m" name="marker"></fx-icon><fx-icon class="g" name="gear"></fx-icon>`);

def('task-button',h=>{const on=h.hasAttribute('on'),run=h.hasAttribute('run');return `<style>:host{display:flex;align-items:center;justify-content:center;width:49px;height:40px;box-sizing:border-box;${run?`background-image:linear-gradient(#76b9ed,#76b9ed)${on?',linear-gradient(#50575e,#50575e)':''};background-size:${on?'48px 2px,48px 40px':'40px 2px'};background-position:${on?'0 38px,0 0':'4px 38px'};background-repeat:no-repeat;`:''}}fx-icon{margin-left:${h.getAttribute('dx')||0}px;margin-top:${h.getAttribute('dy')||0}px}</style><fx-icon name="${h.getAttribute('i')}"></fx-icon>`});

def('task-bar',`<style>:host{display:flex;height:40px;background:linear-gradient(90deg,#1c242a,#202a32 45%,#1d2831 70%,#1b2c3b 96%,#1b2937);color:#fff;font-family:"Open Sans","Noto Sans",sans-serif;align-items:center}
.st{width:48px;display:flex;justify-content:center}.se{box-sizing:border-box;width:288px;height:40px;border:1px solid #5d5d5d;background:#333;display:flex;align-items:center;padding-left:11px;font-size:15px;color:#d8d8d8;border-bottom-color:#484848}
.se fit-text{margin-left:11px;margin-right:auto}.tv{margin-left:16px;margin-right:18px}.a{display:flex}
.r{display:flex;align-items:center;margin-left:auto;font-size:14.500px}.dt{display:flex;flex-direction:column;align-items:center;font-size:11.800px;line-height:18px;width:48px;padding-bottom:1px}
.e{width:1px;height:40px;background:#6c767e;margin:0 4px 0 10px}</style>
<div class="st"><fx-icon name="win"></fx-icon></div><div class="se"><fx-icon name="search"></fx-icon><fit-text w="128">Type here to search</fit-text><fx-icon name="art"></fx-icon></div><fx-icon class="tv" name="task"></fx-icon>
<div class="a"><task-button i="explorer" run></task-button><task-button i="chrome"></task-button><task-button i="steam" dx="-1"></task-button><task-button i="discord" run></task-button><task-button i="sets" run></task-button><task-button i="spot" run></task-button><task-button i="chromej" dx="2" dy="2" run></task-button><task-button i="fusion" dx="-2" on run></task-button><task-button i="wa" dx="7" dy="3" run></task-button></div>
<div class="r"><fx-icon name="weather"></fx-icon><fit-text w="29" style="margin-left:7px">30°C</fit-text><fit-text w="86" style="margin-left:9px">Mostly cloudy</fit-text><fx-icon name="chev" style="margin-left:25px"></fx-icon><fx-icon name="rec" style="margin-left:11px"></fx-icon><fx-icon name="cam" style="margin-left:12px"></fx-icon><fx-icon name="batt" style="margin-left:9px"></fx-icon><fx-icon name="wifi" style="margin-left:10px"></fx-icon><fx-icon name="vol" style="margin-left:7px"></fx-icon><fx-icon name="pen" style="margin-left:11px"></fx-icon><fit-text w="24" style="margin-left:14px;font-size:12px">ENG</fit-text><div class="dt" style="margin-left:14px"><fit-text w="41">1:54 pm</fit-text><fit-text w="46">6/6/2023</fit-text></div><fx-icon name="notif" style="margin:5px 0 0 20px"></fx-icon><div class="e"></div></div>`);

def('fusion-app',`<style>:host{display:flex;flex-direction:column;width:1920px;height:1080px;background:#fff}
.v{position:relative;height:846px;flex:none;background:#fff}.v>*{position:absolute}
model-canvas{left:0;top:0}browser-panel{left:5px;top:4px}comments-panel{left:5px;top:817px}nav-bar{left:843px;top:816px}view-cube{left:1808px;top:14px}
.w,.v{box-shadow:inset 1px 0 #222;flex:none}</style>
<title-bar></title-bar><div class="w"><tab-strip></tab-strip><ribbon-bar></ribbon-bar></div>
<div class="v"><model-canvas></model-canvas><browser-panel></browser-panel><comments-panel></comments-panel><nav-bar></nav-bar><view-cube></view-cube></div><time-line></time-line><task-bar></task-bar>`);
</script>
</body>
</html>
